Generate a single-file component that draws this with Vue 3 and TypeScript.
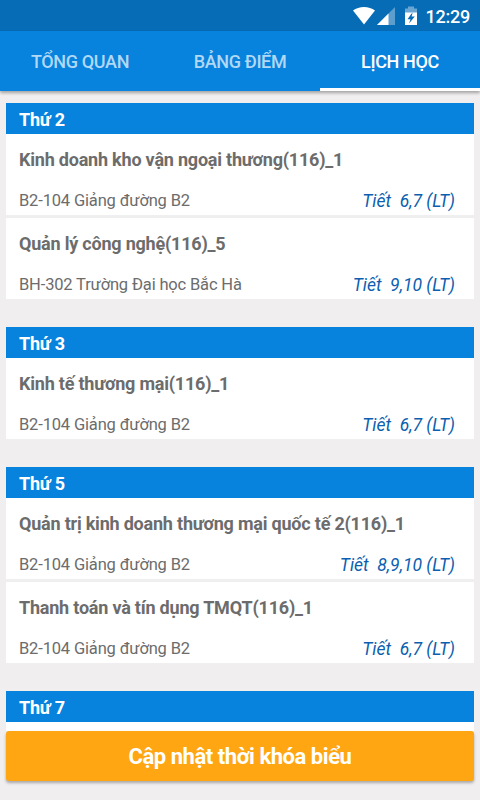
<script setup lang="ts">
interface Lesson {
  title: string
  room: string
  periods: string
}

interface Day {
  name: string
  lessons: Lesson[]
}

const tabs: string[] = ['TỔNG QUAN', 'BẢNG ĐIỂM', 'LỊCH HỌC']
const activeTab = 2

const days: Day[] = [
  {
    name: 'Thứ 2',
    lessons: [
      { title: 'Kinh doanh kho vận ngoại thương(116)_1', room: 'B2-104 Giảng đường B2', periods: '6,7 (LT)' },
      { title: 'Quản lý công nghệ(116)_5', room: 'BH-302 Trường Đại học Bắc Hà', periods: '9,10 (LT)' },
    ],
  },
  {
    name: 'Thứ 3',
    lessons: [
      { title: 'Kinh tế thương mại(116)_1', room: 'B2-104 Giảng đường B2', periods: '6,7 (LT)' },
    ],
  },
  {
    name: 'Thứ 5',
    lessons: [
      { title: 'Quản trị kinh doanh thương mại quốc tế 2(116)_1', room: 'B2-104 Giảng đường B2', periods: '8,9,10 (LT)' },
      { title: 'Thanh toán và tín dụng TMQT(116)_1', room: 'B2-104 Giảng đường B2', periods: '6,7 (LT)' },
    ],
  },
  { name: 'Thứ 7', lessons: [] },
]
</script>

<template>
  <div class="screen">
    <div class="status">
      <svg class="icons" width="66" height="20" viewBox="0 0 66 20">
        <path d="M0 4.600C3 2.200 6.800 .9 11 .9s8 1.300 11 3.700L11 18.600z" fill="#fff" />
        <path d="M42 .9V19H24z" fill="#fff" fill-opacity=".35" />
        <path d="M35.500 7.400V19H24z" fill="#fff" />
        <path d="M55 .5h6v2h3v5H52v-5h3z" fill="#fff" fill-opacity=".4" />
        <path fill-rule="evenodd" d="M52 6.500h12V19H52zM60 5.500l-5.500 7.800h3l-1.500 4.200 5.800-7h-3.200z" fill="#fff" />
      </svg>
      <span class="clock">12:29</span>
    </div>
    <nav class="tabs">
      <button
        v-for="(tab, i) in tabs"
        :key="tab"
        class="tab"
        :class="{ active: i === activeTab }"
      >{{ tab }}</button>
    </nav>
    <main class="list">
      <section v-for="day in days" :key="day.name" class="day">
        <h2 class="day-name">{{ day.name }}</h2>
        <article v-for="lesson in day.lessons" :key="lesson.title" class="lesson">
          <h3 class="title">{{ lesson.title }}</h3>
          <div class="details">
            <span class="room">{{ lesson.room }}</span>
            <span class="periods">Tiết&nbsp; {{ lesson.periods }}</span>
          </div>
        </article>
        <div v-if="!day.lessons.length" class="lesson"></div>
      </section>
    </main>
    <footer class="footer">
      <button class="update">Cập nhật thời khóa biểu</button>
    </footer>
  </div>
</template>

<style>
body {
  margin: 0;
  overflow: hidden;
}
</style>

<style scoped>
.screen {
  display: flex;
  flex-direction: column;
  width: 480px;
  height: 800px;
  overflow: hidden;
  background: #f0eeef;
  font-family: Roboto, "Noto Sans", sans-serif;
}

.status {
  display: flex;
  flex: none;
  align-items: center;
  justify-content: flex-end;
  gap: 7px;
  height: 31px;
  box-sizing: border-box;
  padding-right: 10px;
  background: #066cb5;
  color: #fff;
}

.icons {
  display: block;
}

.clock {
  padding-top: 2px;
  font-size: 18px;
  font-weight: 500;
  letter-spacing: -0.25px;
  line-height: 31px;
}

.tabs {
  position: relative;
  display: flex;
  flex: none;
  height: 60px;
  background: #0782dd;
  box-shadow: 0 2px 3px rgba(0, 0, 0, 0.32);
}

.tab {
  flex: 1;
  box-sizing: border-box;
  border: 0;
  border-bottom: 3px solid transparent;
  padding: 4px 0 0;
  background: none;
  color: #b1d8f5;
  font: 500 18px/24px Roboto, sans-serif;
  letter-spacing: -0.35px;
}

.tab.active {
  border-bottom-color: #fff;
  color: #fff;
}

.list {
  display: flex;
  flex: 1;
  flex-direction: column;
  gap: 28px;
  min-height: 0;
  overflow: hidden;
  padding: 12px 6px 0;
}

.day {
  flex: none;
  background: #fff;
}

.day-name {
  height: 31px;
  box-sizing: border-box;
  margin: 0;
  padding: 1px 0 0 13px;
  background: #0782dd;
  color: #fff;
  font-size: 18px;
  font-weight: 700;
  letter-spacing: -0.2px;
  line-height: 32px;
}

.lesson {
  height: 81px;
  box-sizing: border-box;
  padding: 14px 19px 0 13px;
}

.lesson + .lesson {
  height: 84px;
  border-top: 3px solid #f0eff0;
}

.title {
  margin: 0;
  color: #6c6c6c;
  font-size: 18px;
  font-weight: 700;
  letter-spacing: -0.21px;
  line-height: 24px;
  white-space: nowrap;
}

.details {
  display: flex;
  justify-content: space-between;
  margin-top: 17px;
  font-size: 16.500px;
  line-height: 24px;
}

.room {
  color: #6c6c6c;
  letter-spacing: -0.16px;
}

.periods {
  color: #0c5fb0;
  font-size: 17.500px;
  font-style: italic;
}

.footer {
  flex: none;
  height: 69px;
  box-sizing: border-box;
  padding: 0 6px;
}

.update {
  display: block;
  width: 100%;
  height: 50px;
  border: 0;
  border-radius: 3px;
  padding: 2px 0 0;
  background: #ffa612;
  box-shadow: 0 2px 3px rgba(0, 0, 0, 0.3);
  color: #fff;
  font: 700 22px/28px Roboto, sans-serif;
  letter-spacing: -0.45px;
}
</style>
